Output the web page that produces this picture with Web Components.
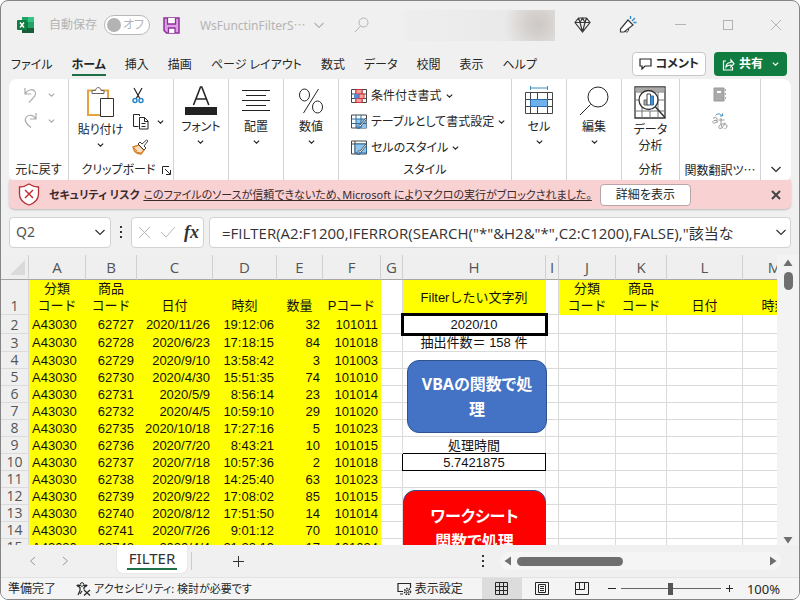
<!DOCTYPE html>
<html lang="ja">
<head>
<meta charset="utf-8">
<title>WsFunctinFilter - Excel</title>
<style>
html,body{margin:0;height:100%;background:#fff}
body{font:12px/16px "Noto Sans","Noto Sans CJK JP",sans-serif;font-feature-settings:"palt";color:#262626;overflow:hidden}
</style>
</head>
<body>
<excel-window></excel-window>
<script>
const BASE = `
*{box-sizing:border-box}
button,input{font:inherit;font-feature-settings:inherit;color:inherit;margin:0;padding:0;border:0;background:none;border-radius:0}
button{display:inline-flex;align-items:center;justify-content:center;white-space:nowrap}
a{color:inherit}
`;
function define(name, css, html) {
  customElements.define(name, class extends HTMLElement {
    constructor() {
      super();
      const root = this.attachShadow({ mode: 'open' });
      const t = document.createElement('template');
      t.innerHTML = `<style>${BASE}${css}</style>${typeof html === 'function' ? html(this) : html}`;
      root.append(t.content.cloneNode(true));
    }
  });
}

const ICONS = {
  excel: [18, 17, `<path d="M5 0h12v16H5z" fill="#21a366" stroke="none"/><path d="M5 0h6v5H5z" fill="#21a366" stroke="none"/><path d="M11 0h6v5h-6z" fill="#33c481" stroke="none"/><path d="M5 5h6v6H5z" fill="#107c41" stroke="none"/><path d="M5 11h12v5H5z" fill="#185c37" stroke="none"/><path d="M11 5h6v6h-6z" fill="#21a366" stroke="none"/><rect y="3" width="10" height="10" rx="1" fill="#107c41" stroke="none"/><path d="M3 5.500l4 5M7 5.500l-4 5" stroke="#fff" stroke-width="1.500"/>`],
  save: [17, 17, `<path d="M1 1h15v15H3.500L1 13.500z" fill="#dda0e4" stroke="#8e2f9c" stroke-width="1.500"/><path d="M4.500 1v6h8V1M5.500 16v-5h6.500v5" fill="#fff" stroke="#8e2f9c" stroke-width="1.300"/>`],
  search: [16, 16, `<circle cx="9.500" cy="5.500" r="4.500"/><path d="M6.500 9L1 15"/>`],
  diamond: [17, 16, `<path d="M4.500 1h8L16 5.500 8.500 15 1 5.500zM1 5.500h15M4.500 1L6 5.500 8.500 15 11 5.500 12.500 1M6 5.500L8.500 1 11 5.500" stroke-width="1.200"/>`],
  horn: [18, 18, `<path d="M9 4l5 5L5 16H1.500v-3z" fill="#fff" stroke-width="1.200"/><path d="M6 15c1 2 4 1 3.500-2"/><path d="M11.500 3V0M13 5l3-3M14.500 6.500h3" stroke="#2b88c8" stroke-width="1.300"/>`],
  min: [12, 12, `<path d="M1 5.500h11"/>`],
  max: [12, 12, `<rect x="1.500" y="1.500" width="9" height="9"/>`],
  close: [12, 12, `<path d="M1 1l10 10M11 1L1 11"/>`],
  chev: [7, 4, `<path d="M.8.600l2.700 2.500L6.200.600" stroke-width="1.200"/>`],
  chevL: [12, 7, `<path d="M1.500 1l4.500 4.500L10.500 1" stroke-width="1.200"/>`],
  undo: [18, 18, `<path d="M3 2v6h6M3 8c3-5 8-5.500 10-2.500 2 3-1 5.500-6 11" stroke-width="1.200"/>`],
  redo: [18, 18, `<path d="M14 1v6H8M14 7c-3-5-8-4.500-10-1.500-2 3 1 7 5 10" stroke-width="1.200"/>`],
  paste: [28, 32, `<path d="M2 4.500h20V29H2z" fill="#fff" stroke="#e8a33d" stroke-width="2"/><path d="M6 7.500V4.500h3.500C10 .500 14.500.500 15 4.500h3v3z" fill="#fff" stroke="#666"/><path d="M14.500 12.500h13v18h-13z" fill="#fff" stroke="#333"/>`],
  cut: [12, 17, `<path d="M2 1l6 11M10 1L4 12" stroke-width="1.200"/><circle cx="3" cy="13.500" r="2" stroke="#2b88c8" stroke-width="1.500"/><circle cx="9" cy="13.500" r="2" stroke="#2b88c8" stroke-width="1.500"/>`],
  copy: [17, 17, `<path d="M7.500 3V1.500h-6v12h5M7.500 4.500h5l3.500 3.500v8H7.500zM12.500 4.500v4H16M9.500 10.500h4M9.500 13.500h4"/>`],
  brush: [17, 16, `<path d="M1 8l6-2 5 5-3 4C5 15 2 12 1 8z" fill="#fbe0c0" stroke="#d9822b" stroke-width="1.500"/><path d="M2 9l3 3M4 13l5 1" stroke="#d9822b"/><path d="M6 5l6 6 2-2-2-2 4-5-1.500-1-4.500 4-2-2z" fill="#fff" stroke="#444"/>`],
  launcher: [9, 9, `<path d="M.500 8V.500H7M3 3l5 5M8.500 4v4.500H4"/>`],
  font: [32, 31, `<path d="M8.500 20L15.500 2h1.300l7 18M11 14h10.500" stroke-width="1.600"/><path d="M0 22h32v8H0z" fill="#222" stroke="none"/>`],
  align: [28, 26, `<path d="M0 2.500h28M4 7.500h20M0 12.500h28M4 17.500h20M0 22.500h28" stroke="#222"/>`],
  percent: [26, 26, `<ellipse cx="6.500" cy="7" rx="5" ry="6"/><ellipse cx="19.500" cy="19" rx="5" ry="6"/><path d="M20.500 1l-15 24"/>`],
  cond: [16, 15, `<path d="M.500.500h15v13H.500zM.500 5h15M.500 9.500h15M5 .500v13M11 .500v13" fill="#fff" stroke="#444"/><path d="M5 .500h6V5H5zM5 9.500h6v4H5z" fill="#f4a0a0" stroke="#d13438"/><path d="M3 5h5v4.500H3z" fill="#4a90d9" stroke="none"/><path d="M8 5h5v4.500H8z" fill="#f4a0a0" stroke="#d13438"/>`],
  tbl: [16, 16, `<path d="M.500 1h15v13H.500z" fill="#fff" stroke="#444"/><path d="M5 5h10.500v9H5z" fill="#8ec5ef" stroke="none"/><path d="M.500 5h15M.500 9.500h15M5 1v13M10 1v13" stroke="#2f6f9f"/><path d="M6 14c0-3 2-3 3-3l6-7 1 1-6 7c0 2-2 3-4 2z" fill="#fff" stroke="#333" stroke-width=".8"/><path d="M5.500 15c1 0 1-3 3-3s2 3-3 3z" fill="#2b7cd3" stroke="none"/>`],
  sty: [16, 16, `<path d="M.500 1h15v13H.500zM.500 4h15M4 1v13" fill="#fff" stroke="#444"/><path d="M4 4h11.500v9H4z" fill="#8ec5ef" stroke="#2f6f9f"/><path d="M6 14c0-3 2-3 3-3l6-7 1 1-6 7c0 2-2 3-4 2z" fill="#fff" stroke="#333" stroke-width=".8"/><path d="M5.500 15c1 0 1-3 3-3s2 3-3 3z" fill="#2b7cd3" stroke="none"/>`],
  cells: [28, 29, `<path d="M5.500 0v4M22.500 0v4M5.500 2h17" stroke="#3b8fb5"/><path d="M.500 6.500h27v21H.500zM.500 13.500h27M.500 20.500h27M5.500 6.500v21M12.500 6.500v21M22.500 6.500v21" fill="#fff" stroke="#444"/><path d="M5.500 13.500h17v7h-17z" fill="#6fb1ea" stroke="#2b6ca8"/>`],
  find: [30, 30, `<circle cx="19" cy="11" r="10"/><path d="M11.500 18.500L1 29"/>`],
  analyze: [32, 33, `<path d="M1 1h30v31H1z" fill="#fff" stroke="#333" stroke-width="1.300"/><path d="M1.500 1.500h29v4h-29z" fill="#aaa" stroke="none"/><path d="M1 6h30M1 14h30M1 25h30M8 6v26M16 25v7M24 6v26" stroke="#777"/><circle cx="14.500" cy="14" r="9.500" fill="#fff" stroke="#333" stroke-width="1.300"/><path d="M10 14h3.500v5H10z" fill="#aaa" stroke="#666"/><path d="M13 8h3.500v11H13z" fill="#fff" stroke="#444"/><path d="M16.500 10h3v9h-3z" fill="#4a90d9" stroke="#2b6ca8"/><path d="M21.500 21L31 31.500" stroke="#333" stroke-width="1.500"/>`],
  book: [14, 15, `<path d="M1 1h10v13H1z" fill="#aaa" stroke="#999"/><path d="M4 4h4v2H4z" fill="#fff" stroke="none"/><path d="M12.500 2v2M12.500 6v2M12.500 10v2" stroke="#aaa"/>`],
  trans: [16, 17, `<path d="M1 5.500c1-1.500 4-1.500 4 .500v4M5 7.500C2 7 .500 8 1 9.500s3 .5 4-1"/><path d="M3.500 2.500c2-2.500 5-2 6.500.500M10.500.500V3H8" stroke="#4a8fb9"/><path d="M6.500 7h6M9 5v5.500c0 2 .500 3.500 2 5M13 9.500c-.500 3-3 6-5 6s-1.500-4 2-4.500 5 .5 5 2-1 2.500-2.500 3"/>`],
  shield: [22, 23, `<path d="M11 1c3 2 6 3 9.500 3v7c0 5-4 9-9.500 11C5.500 20 1.500 16 1.500 11V4C5 4 8 3 11 1z" fill="#fff" stroke="#b52e31" stroke-width="1.300"/><path d="M7 7l8 8M15 7l-8 8" stroke="#c0272d" stroke-width="1.400"/>`],
  cross: [13, 13, `<path d="M1 1l11 11M12 1L1 12"/>`],
  check: [16, 12, `<path d="M1 6l5 5L15 1"/>`],
  comment: [13, 12, `<path d="M1 1h11v7H6l-3 3V8H1z" stroke-width="1.200"/>`],
  share: [13, 13, `<path d="M4 3H1.500v9h9V9M4 9c0-3 2-4.500 5-4.500V2l3 3.800L9 9V7C7 7 5 7.500 4 9z" stroke-width="1.200"/>`],
  dots: [3, 13, `<path d="M0 0h2v2H0zM0 5h2v2H0zM0 10h2v2H0z" fill="currentColor" stroke="none"/>`],
  left: [7, 10, `<path d="M6 1L1.500 5 6 9"/>`],
  right: [7, 10, `<path d="M1 1l4.500 4L1 9"/>`],
  plus: [11, 11, `<path d="M5.500 0v11M0 5.500h11"/>`],
  plusS: [8, 8, `<path d="M3.500 0v7M0 3.500h7"/>`],
  minus: [8, 8, `<path d="M0 3.500h8"/>`],
  triU: [10, 8, `<path d="M5 .500L9.500 7h-9z" fill="#6f6f6f" stroke="none"/>`],
  triD: [10, 8, `<path d="M5 7.500L9.500 1h-9z" fill="#6f6f6f" stroke="none"/>`],
  triL: [8, 10, `<path d="M.500 5L7 .500v9z" fill="#6f6f6f" stroke="none"/>`],
  triR: [8, 10, `<path d="M7.500 5L1 .500v9z" fill="#6f6f6f" stroke="none"/>`],
  corner: [18, 16, `<path d="M15 0v15H0z" fill="#dadada" stroke="none"/>`],
  access: [15, 14, `<circle cx="6" cy="2.500" r="1.800"/><path d="M1 4c1.500 0 2.500 1.500 3 1.500v3L2 13M11 4C9.500 4 8.500 5.500 8 5.500v2M1 4c0-1.500 2-1 3 0M11 4c0-1.500-2-1-3 0M4 12l2-3M8 8l6 5.500M14 8l-6 5.500" stroke-width="1.200"/>`],
  display: [15, 13, `<path d="M6 9.500H1v-8h12.500V6M3 12h3" stroke-width="1.200"/><circle cx="10.500" cy="9.500" r="1.200"/><circle cx="10.500" cy="9.500" r="3" stroke-dasharray="1.500 1" stroke-width="1.500"/>`],
  vgrid: [13, 13, `<path d="M.500.500h12v12H.500zM.500 4.500h12M.500 8.500h12M4.500.500v12M8.500.500v12"/>`],
  vpage: [14, 13, `<path d="M.500.500h13v12H.500zM3.500 2.500h7v8h-7zM5 4.500h4M5 6.500h4M5 8.500h4"/>`],
  vbreak: [14, 13, `<path d="M.500.500h13v12H.500zM4.500.500v7h5M9.500.500v7M.500 7.500h4"/>`]
};
define('ui-icon', ':host{display:inline-flex;flex:none}svg{display:block}', el => {
  const [w, h, body] = ICONS[el.getAttribute('name')];
  return `<svg width="${w}" height="${h}" viewBox="0 0 ${w} ${h}" fill="none" stroke="currentColor" aria-hidden="true">${body}</svg>`;
});

define('title-bar', `
:host{display:flex;align-items:center;height:48px;padding:0 17px 0 16px;color:#b4b4b4}
label{display:flex;align-items:center;gap:7px;margin-left:14px}
input[type=checkbox]{appearance:none;position:absolute;inset:0}
.sw{position:relative;display:flex;align-items:center;justify-content:space-between;width:46px;height:20px;border:1px solid #b8b8b8;border-radius:10px;background:#fff;padding:0 5px 0 2px}
.sw i{width:14px;height:14px;border-radius:50%;background:#b3b3b3}
.save{margin-left:13px}
.doc{margin-left:20px;gap:7px}
.doc b{font-weight:400}
.doc span{font-family:"Noto Sans CJK JP",sans-serif}
.find{margin-left:29px}
.account{width:152px;height:31px;margin-left:33px;background:radial-gradient(circle at 135px 14px,#cdc8c4 0,#d5d1ce 12px,transparent 34px),linear-gradient(90deg,#eee,#e7e7e7)}
.tools{display:flex;align-items:center;margin-left:19px;gap:28px;color:#3a3a3a}
.win{display:flex;gap:36px;margin-left:auto}
`, `
<ui-icon name="excel"></ui-icon>
<label>自動保存<span class="sw"><input type="checkbox" role="switch"><i></i>オフ</span></label>
<button class="save" aria-label="保存"><ui-icon name="save"></ui-icon></button>
<button class="doc"><b>WsFunctinFilterS<span>…</span></b><ui-icon name="chevL"></ui-icon></button>
<button class="find" aria-label="検索"><ui-icon name="search"></ui-icon></button>
<div class="account"></div>
<div class="tools"><ui-icon name="diamond"></ui-icon><ui-icon name="horn"></ui-icon></div>
<div class="win"><button aria-label="最小化"><ui-icon name="min"></ui-icon></button><button aria-label="最大化"><ui-icon name="max"></ui-icon></button><button aria-label="閉じる"><ui-icon name="close"></ui-icon></button></div>
`);

define('ribbon-tabs', `
:host{display:flex;align-items:center;height:30px;padding:0 12px 0 10px}
nav{display:flex;gap:19px}
nav button{height:24px;padding-top:4px;border-bottom:2px solid transparent}
nav .on{font-weight:700;border-color:#1f6f48}
.act{margin-left:auto;display:flex;gap:8px}
.act button{height:24px;border-radius:4px;font-weight:700;gap:4px;padding:0 8px}
.act .c{background:#fff;border:1px solid #c8c8c8;padding:0 6px}
.s{background:#107c41;color:#fff}
.s ui-icon:last-child{margin-left:5px}
`, `
<nav><button>ファイル</button><button class="on">ホーム</button><button>挿入</button><button>描画</button><button>ページ レイアウト</button><button>数式</button><button>データ</button><button>校閲</button><button>表示</button><button>ヘルプ</button></nav>
<div class="act"><button class="c"><ui-icon name="comment"></ui-icon>コメント</button><button class="s"><ui-icon name="share"></ui-icon>共有<ui-icon name="chev"></ui-icon></button></div>
`);

define('ribbon-group', `
:host{display:flex;flex-direction:column;min-width:0;padding:4px 0;border-right:1px solid #d4d4d4}
.body{flex:1;display:flex;justify-content:center;min-height:0}
.label{display:flex;justify-content:center;align-items:center;height:18px;white-space:nowrap}
`, `<div class="body"><slot></slot></div><div class="label"><slot name="label"></slot></div>`);

define('big-button', `
:host{display:flex}
button{flex-direction:column;justify-content:flex-start}
.pic{height:35px;display:flex;align-items:center}
.t{height:16px;margin-top:1px;text-align:center}
:host([wide]) .t{height:32px}
:host([low]) .pic{height:38px}
ui-icon[name=chev]{margin-top:5px}
`, el => `<button><span class="pic"><ui-icon name="${el.getAttribute('icon')}"></ui-icon></span><span class="t"><slot></slot></span>${el.hasAttribute('wide') ? '' : '<ui-icon name="chev"></ui-icon>'}</button>`);

define('ribbon-panel', `
:host{display:grid;grid-template-columns:60px 105px 55px 55px 55px 173px 55px 55px 58px 81px 1fr;height:101px;margin:0 8px;background:#fff;border-radius:8px 8px 6px 6px}
.col{display:flex;flex-direction:column}
.hist{gap:8px;color:#aaa;padding-top:3px}
.hist button{gap:8px}
.clip{gap:9px;display:flex}
.clip .col{gap:9px;align-items:flex-start;padding-top:4px}
.clip .col button{gap:8px}
.launch{margin-left:6px}
.lab{margin-left:10px}
.styles{width:100%;padding-left:12px;align-items:flex-start}
.styles button{height:26px;gap:4px}
.gray{gap:11px;color:#999;align-items:center;padding-top:4px}
.cjk{font-family:"Noto Sans CJK JP",sans-serif}
.end{display:flex;justify-content:center;align-items:flex-end;padding-bottom:10px}
`, `
<ribbon-group><div class="col hist"><button aria-label="元に戻す"><ui-icon name="undo"></ui-icon><ui-icon name="chev"></ui-icon></button><button aria-label="やり直し"><ui-icon name="redo"></ui-icon><ui-icon name="chev"></ui-icon></button></div><span slot="label">元に戻す</span></ribbon-group>
<ribbon-group><div class="clip"><big-button icon="paste" low>貼り付け</big-button><div class="col"><button aria-label="切り取り"><ui-icon name="cut"></ui-icon></button><button aria-label="コピー"><ui-icon name="copy"></ui-icon><ui-icon name="chev"></ui-icon></button><button aria-label="書式のコピー"><ui-icon name="brush"></ui-icon></button></div></div><span slot="label" class="lab">クリップボード</span><button slot="label" class="launch" aria-label="クリップボードの設定"><ui-icon name="launcher"></ui-icon></button></ribbon-group>
<ribbon-group><big-button icon="font">フォント</big-button></ribbon-group>
<ribbon-group><big-button icon="align">配置</big-button></ribbon-group>
<ribbon-group><big-button icon="percent">数値</big-button></ribbon-group>
<ribbon-group><div class="col styles"><button><ui-icon name="cond"></ui-icon>条件付き書式<ui-icon name="chev"></ui-icon></button><button><ui-icon name="tbl"></ui-icon>テーブルとして書式設定<ui-icon name="chev"></ui-icon></button><button><ui-icon name="sty"></ui-icon>セルのスタイル<ui-icon name="chev"></ui-icon></button></div><span slot="label">スタイル</span></ribbon-group>
<ribbon-group><big-button icon="cells">セル</big-button></ribbon-group>
<ribbon-group><big-button icon="find">編集</big-button></ribbon-group>
<ribbon-group><big-button icon="analyze" wide low>データ<br>分析</big-button><span slot="label">分析</span></ribbon-group>
<ribbon-group><div class="col gray"><ui-icon name="book"></ui-icon><ui-icon name="trans"></ui-icon></div><span slot="label" class="cjk">関数翻訳ツ…</span></ribbon-group>
<button class="end" aria-label="リボンの表示オプション"><ui-icon name="chevL"></ui-icon></button>
`);

define('message-bar', `
:host{display:flex;align-items:center;height:29px;margin:0 8px;padding:0 10px 0 9px;background:#f8d1d3;border-radius:0 0 6px 6px;box-shadow:0 1px 2px #bbb;white-space:nowrap;color:#3b2a2b;font-size:11px}
b{margin:0 4px 0 9px}
.more{margin-left:8px;width:91px;height:22px;background:#fff;border:1px solid #b9a5a6;border-radius:4px;color:#262626;font-size:12px}
.x{margin-left:auto;color:#444}
.x svg{stroke-width:2}
`, `<ui-icon name="shield"></ui-icon><b>セキュリティ リスク</b><a href="#">このファイルのソースが信頼できないため、Microsoft によりマクロの実行がブロックされました。</a><button class="more">詳細を表示</button><button class="x" aria-label="閉じる"><svg width="10" height="10" viewBox="0 0 10 10" fill="none" stroke="currentColor"><path d="M1 1l8 8M9 1L1 9"/></svg></button>`);

define('formula-bar', `
:host{display:flex;align-items:center;height:46px;padding:0 8px;color:#333}
.box{display:flex;align-items:center;height:31px;background:#fff;border:1px solid #d2d2d2;border-radius:4px}
.name{width:102px;padding:0 4px 0 6px}
.name input{width:100%;min-width:0;font-size:14px;color:#555}
ui-icon[name=dots]{margin:0 8px 0 9px}
.ops{width:73px;justify-content:space-between;padding:0 4px 0 6px;color:#b5b5b5}
.fx{font:italic 700 18px/22px "Liberation Serif",serif;color:#333}
.f{flex:1;margin-left:5px;padding:0 3px 0 12px}
.f input{flex:1;min-width:0;font:15px "Open Sans","Noto Sans CJK JP",sans-serif;font-feature-settings:normal}
`, `<div class="box name"><input aria-label="名前ボックス" value="Q2"><button aria-label="名前の一覧"><ui-icon name="chevL"></ui-icon></button></div><ui-icon name="dots"></ui-icon>
<div class="box ops"><button aria-label="キャンセル"><ui-icon name="cross"></ui-icon></button><button aria-label="入力"><ui-icon name="check"></ui-icon></button><button class="fx" aria-label="関数の挿入">fx</button></div>
<div class="box f"><input aria-label="数式" value='=FILTER(A2:F1200,IFERROR(SEARCH("*"&amp;H2&amp;"*",C2:C1200),FALSE),"該当な'><button aria-label="数式バーの展開"><ui-icon name="chevL"></ui-icon></button></div>`);

const ROWS = [
  ['62727', '2020/11/26', '19:12:06', '32', '101011'], ['62728', '2020/6/23', '17:18:15', '84', '101018'],
  ['62729', '2020/9/10', '13:58:42', '3', '101003'], ['62730', '2020/4/30', '15:51:35', '74', '101010'],
  ['62731', '2020/5/9', '8:56:14', '23', '101014'], ['62732', '2020/4/5', '10:59:10', '29', '101020'],
  ['62735', '2020/10/18', '17:27:16', '5', '101023'], ['62736', '2020/7/20', '8:43:21', '10', '101015'],
  ['62737', '2020/7/18', '10:57:36', '2', '101018'], ['62738', '2020/9/18', '14:25:40', '63', '101023'],
  ['62739', '2020/9/22', '17:08:02', '85', '101015'], ['62740', '2020/8/12', '17:51:50', '14', '101014'],
  ['62741', '2020/7/26', '9:01:12', '70', '101010'], ['62742', '2020/4/4', '21:23:19', '17', '101024']];
const H = { 2: ['2020/10', 'key'], 3: ['抽出件数＝ 158 件', ''], 9: ['処理時間', ''], 10: ['5.7421875', 'box'] };
define('sheet-grid', `
:host{flex:1;min-height:0;display:flex;overflow:hidden}
.view{position:relative;flex:1;min-width:0;overflow:hidden;background:#fff}
table{border-collapse:separate;border-spacing:0;table-layout:fixed;width:806px;font:13px/15px "Liberation Sans","Noto Sans CJK JP",sans-serif;font-feature-settings:normal;color:#111}
th,td{padding:0 2px 0 3px;white-space:nowrap;border-right:1px solid #dadada;border-bottom:1px solid #dadada;overflow:hidden}
th{font:15px/17px "Open Sans",sans-serif;color:#555;background:#efefef;padding:0;text-align:center}
thead th{height:25px;border-bottom-color:#a6a6a6;border-right-color:#d0d0d0}
tbody th{font-size:14px;vertical-align:bottom;line-height:16px}
thead th:first-child{text-align:right;vertical-align:bottom}
td{text-align:right;height:17px;vertical-align:middle}
.y{background:#ff0;border-color:#ff0}
.h{text-align:center;vertical-align:bottom;line-height:17px;padding:0}
.l{text-align:left}
.c{text-align:center;padding:0}
.mid{vertical-align:middle}
.key{outline:3px solid #000;outline-offset:-1px;position:relative}
.box{box-shadow:0 -1px #000,-1px 0 #000;border-color:#000}
.shape{position:absolute;left:406px;top:105px;width:140px;height:73px;border:1px solid #2f528f;border-radius:12px;background:#4472c4;color:#fff;font:700 16px/25px "Noto Sans","Noto Sans CJK JP",sans-serif;font-feature-settings:inherit;flex-direction:column}
.red{left:402px;top:235px;width:143px;padding-top:5px;background:#f00}
.bar{width:22px;display:flex;flex-direction:column;align-items:center;background:#f3f3f3;padding:4px 0 1px}
.thumb{width:9px;height:18px;border-radius:5px;background:#6f6f6f;margin:5px 0 auto}
`, () => {
  const w = [28, 57, 51, 76, 64, 46, 58, 22, 143, 13, 57, 51, 76, 64];
  const head = ['', ...'ABCDEFGHIJKLM'];
  const td = (t, c) => `<td class="${c}">${t}</td>`;
  const hs = ['分類<br>コード', '商品<br>コード', '日付', '時刻', '数量', 'Pコード'].map(t => td(t, 'y h'));
  let s = `<div class="view"><table><colgroup>${w.map(x => `<col style="width:${x}px">`).join('')}</colgroup><thead><tr>${head.map(t => `<th>${t || '<ui-icon name="corner"></ui-icon>'}</th>`).join('')}</tr></thead><tbody>`;
  s += `<tr style="height:35px"><th>1</th>${hs.join('')}<td></td>${td('Filterしたい文字列', 'y c mid')}<td></td>${hs.slice(0, 4).join('')}</tr>`;
  ROWS.forEach((r, i) => {
    const n = i + 2, h = H[n] || ['', ''];
    s += `<tr style="height:${n === 2 ? 19 : n === 3 ? 18 : 17}px"><th>${n}</th>${td('A43030', 'y l')}${r.map(t => td(t, 'y')).join('')}<td></td>${td(h[0], 'c ' + h[1])}${'<td></td>'.repeat(5)}</tr>`;
  });
  return s + `</tbody></table><button class="shape"><span>VBAの関数で処</span><span>理</span></button><button class="shape red"><span>ワークシート</span><span>関数で処理</span></button></div><div class="bar"><ui-icon name="triU"></ui-icon><div class="thumb"></div><ui-icon name="triD"></ui-icon></div>`;
});

define('sheet-tabs', `
:host{display:flex;align-items:center;height:32px;padding:0 18px 0 28px;color:#333}
.nav{display:flex;gap:26px;color:#999}
.tab{align-self:flex-start;height:28px;width:70px;margin-left:48px;background:#fff;border-radius:0 0 5px 5px;font-size:15px;box-shadow:0 0 1px #aaa}
.tab span{border-bottom:2px solid #1f6f48;padding:0 2px;line-height:20px}
.sep{width:1px;height:18px;background:#ccc;margin:0 41px 0 4px}
.scroll{display:flex;align-items:center;width:281px;height:18px;margin-left:15px;padding:0 4px;background:#f5f5f5;border-radius:9px}
.thumb{width:106px;height:9px;border-radius:5px;background:#6f6f6f;margin:0 auto 0 5px}
.d{margin-left:auto}
`, `<div class="nav"><button aria-label="前のシート"><ui-icon name="left"></ui-icon></button><button aria-label="次のシート"><ui-icon name="right"></ui-icon></button></div><button class="tab"><span>FILTER</span></button><div class="sep"></div><button aria-label="新しいシート"><ui-icon name="plus"></ui-icon></button><ui-icon class="d" name="dots"></ui-icon><div class="scroll"><ui-icon name="triL"></ui-icon><div class="thumb"></div><ui-icon name="triR"></ui-icon></div>`);

define('status-bar', `
:host{display:flex;align-items:center;height:22px;padding:0 19px 0 7px;background:#f4f4f4;border-top:1px solid #e2e2e2}
.a{margin-left:20px;gap:3px;font-size:11px}
.r{display:flex;align-items:center;margin-left:auto}
.set{gap:3px;margin-right:19px}
.v{width:40px;height:21px}
.on{background:#dcdcdc}
input{appearance:none;width:100px;height:14px;margin:0 5px;background:linear-gradient(#666,#666) center/100% 1px no-repeat}
input::-webkit-slider-thumb{appearance:none;width:5px;height:12px;background:#555}
.z{margin-left:6px}
.p{margin-left:13px;font-size:13px}
`, `<span>準備完了</span><button class="a"><ui-icon name="access"></ui-icon>アクセシビリティ: 検討が必要です</button>
<div class="r"><button class="set"><ui-icon name="display"></ui-icon>表示設定</button><button class="v on" aria-label="標準"><ui-icon name="vgrid"></ui-icon></button><button class="v" aria-label="ページ レイアウト"><ui-icon name="vpage"></ui-icon></button><button class="v" aria-label="改ページ プレビュー"><ui-icon name="vbreak"></ui-icon></button><button class="z" aria-label="縮小"><ui-icon name="minus"></ui-icon></button><input type="range" aria-label="ズーム" min="10" max="190" value="100"><button aria-label="拡大"><ui-icon name="plusS"></ui-icon></button><button class="p">100%</button></div>`);

define('excel-window', `
:host{display:flex;flex-direction:column;height:calc(100vh - 2px);box-sizing:border-box;border:1px solid #858585;border-radius:8px;overflow:hidden;background:#f0f0f0}
`, `<title-bar></title-bar><ribbon-tabs></ribbon-tabs><ribbon-panel></ribbon-panel><message-bar></message-bar><formula-bar></formula-bar><sheet-grid></sheet-grid><sheet-tabs></sheet-tabs><status-bar></status-bar>`);
</script>
</body>
</html>
